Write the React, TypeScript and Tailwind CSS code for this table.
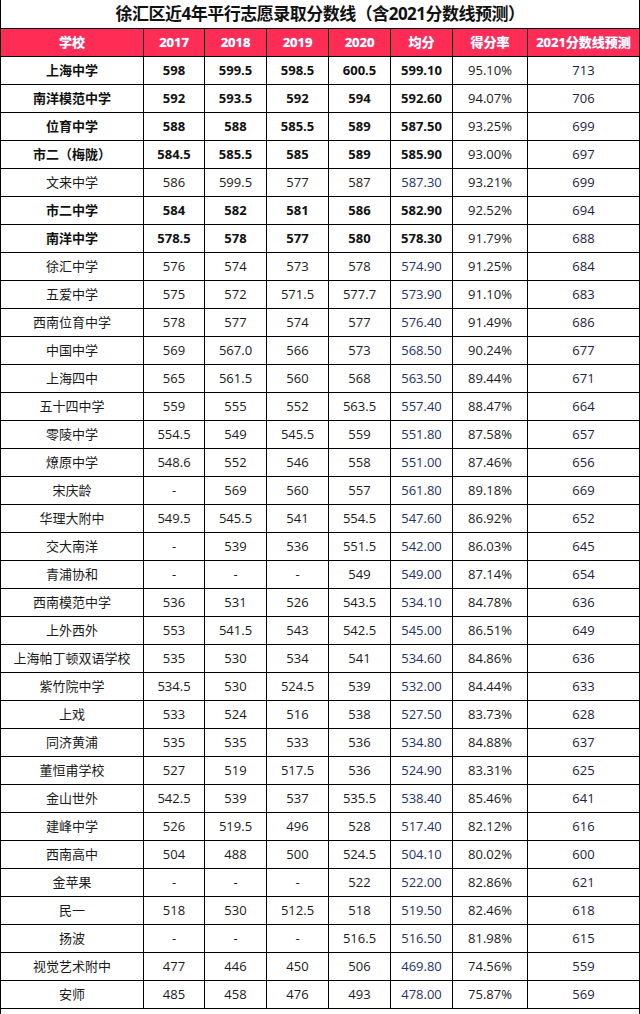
import React from "react";

type Row = [string, string, string, string, string, string, string, string, boolean];

const rows: Row[] = [
  ["上海中学", "598", "599.5", "598.5", "600.5", "599.10", "95.10%", "713", true],
  ["南洋模范中学", "592", "593.5", "592", "594", "592.60", "94.07%", "706", true],
  ["位育中学", "588", "588", "585.5", "589", "587.50", "93.25%", "699", true],
  ["市二（梅陇）", "584.5", "585.5", "585", "589", "585.90", "93.00%", "697", true],
  ["文来中学", "586", "599.5", "577", "587", "587.30", "93.21%", "699", false],
  ["市二中学", "584", "582", "581", "586", "582.90", "92.52%", "694", true],
  ["南洋中学", "578.5", "578", "577", "580", "578.30", "91.79%", "688", true],
  ["徐汇中学", "576", "574", "573", "578", "574.90", "91.25%", "684", false],
  ["五爱中学", "575", "572", "571.5", "577.7", "573.90", "91.10%", "683", false],
  ["西南位育中学", "578", "577", "574", "577", "576.40", "91.49%", "686", false],
  ["中国中学", "569", "567.0", "566", "573", "568.50", "90.24%", "677", false],
  ["上海四中", "565", "561.5", "560", "568", "563.50", "89.44%", "671", false],
  ["五十四中学", "559", "555", "552", "563.5", "557.40", "88.47%", "664", false],
  ["零陵中学", "554.5", "549", "545.5", "559", "551.80", "87.58%", "657", false],
  ["燎原中学", "548.6", "552", "546", "558", "551.00", "87.46%", "656", false],
  ["宋庆龄", "-", "569", "560", "557", "561.80", "89.18%", "669", false],
  ["华理大附中", "549.5", "545.5", "541", "554.5", "547.60", "86.92%", "652", false],
  ["交大南洋", "-", "539", "536", "551.5", "542.00", "86.03%", "645", false],
  ["青浦协和", "-", "-", "-", "549", "549.00", "87.14%", "654", false],
  ["西南模范中学", "536", "531", "526", "543.5", "534.10", "84.78%", "636", false],
  ["上外西外", "553", "541.5", "543", "542.5", "545.00", "86.51%", "649", false],
  ["上海帕丁顿双语学校", "535", "530", "534", "541", "534.60", "84.86%", "636", false],
  ["紫竹院中学", "534.5", "530", "524.5", "539", "532.00", "84.44%", "633", false],
  ["上戏", "533", "524", "516", "538", "527.50", "83.73%", "628", false],
  ["同济黄浦", "535", "535", "533", "536", "534.80", "84.88%", "637", false],
  ["董恒甫学校", "527", "519", "517.5", "536", "524.90", "83.31%", "625", false],
  ["金山世外", "542.5", "539", "537", "535.5", "538.40", "85.46%", "641", false],
  ["建峰中学", "526", "519.5", "496", "528", "517.40", "82.12%", "616", false],
  ["西南高中", "504", "488", "500", "524.5", "504.10", "80.02%", "600", false],
  ["金苹果", "-", "-", "-", "522", "522.00", "82.86%", "621", false],
  ["民一", "518", "530", "512.5", "518", "519.50", "82.46%", "618", false],
  ["扬波", "-", "-", "-", "516.5", "516.50", "81.98%", "615", false],
  ["视觉艺术附中", "477", "446", "450", "506", "469.80", "74.56%", "559", false],
  ["安师", "485", "458", "476", "493", "478.00", "75.87%", "569", false],
];

const headers = ["学校", "2017", "2018", "2019", "2020", "均分", "得分率", "2021分数线预测"];

const font = { fontFamily: "'Open Sans','Noto Sans CJK SC',sans-serif" };

export default function App() {
  return (
    <div className="w-[640px] h-[1014px] overflow-hidden bg-white border-x border-black text-[13px] text-[#1a1a1a]" style={font}>
      <div className="h-[28px] flex items-center justify-center text-[17px] font-bold text-[#111] tracking-[-0.5px]">
        徐汇区近4年平行志愿录取分数线（含2021分数线预测）
      </div>
      <div className="grid grid-cols-[142px_60px_61px_61px_61px_61px_74px_111px] gap-px bg-black py-px auto-rows-[27px]">
        {headers.map((h) => (
          <div key={h} className="bg-[#ff2d55] text-white font-bold flex items-center justify-center [text-shadow:0_0_1px_#a0c8ff]">
            {h}
          </div>
        ))}
        {rows.map((r) => (
          <React.Fragment key={r[0]}>
            <div className={`bg-white flex items-center justify-center ${r[8] ? "font-bold text-[#111]" : ""}`}>{r[0]}</div>
            {[1, 2, 3, 4].map((i) => (
              <div key={i} className={`bg-white flex items-center justify-center ${r[8] ? "font-bold text-[#111]" : ""}`}>{r[i]}</div>
            ))}
            <div className={`bg-white flex items-center justify-center ${r[8] ? "font-bold text-[#111]" : "text-[#1e3366]"}`}>{r[5]}</div>
            <div className="bg-white flex items-center justify-center">{r[6]}</div>
            <div className="bg-white flex items-center justify-center text-[#1c2340]">{r[7]}</div>
          </React.Fragment>
        ))}
      </div>
    </div>
  );
}
